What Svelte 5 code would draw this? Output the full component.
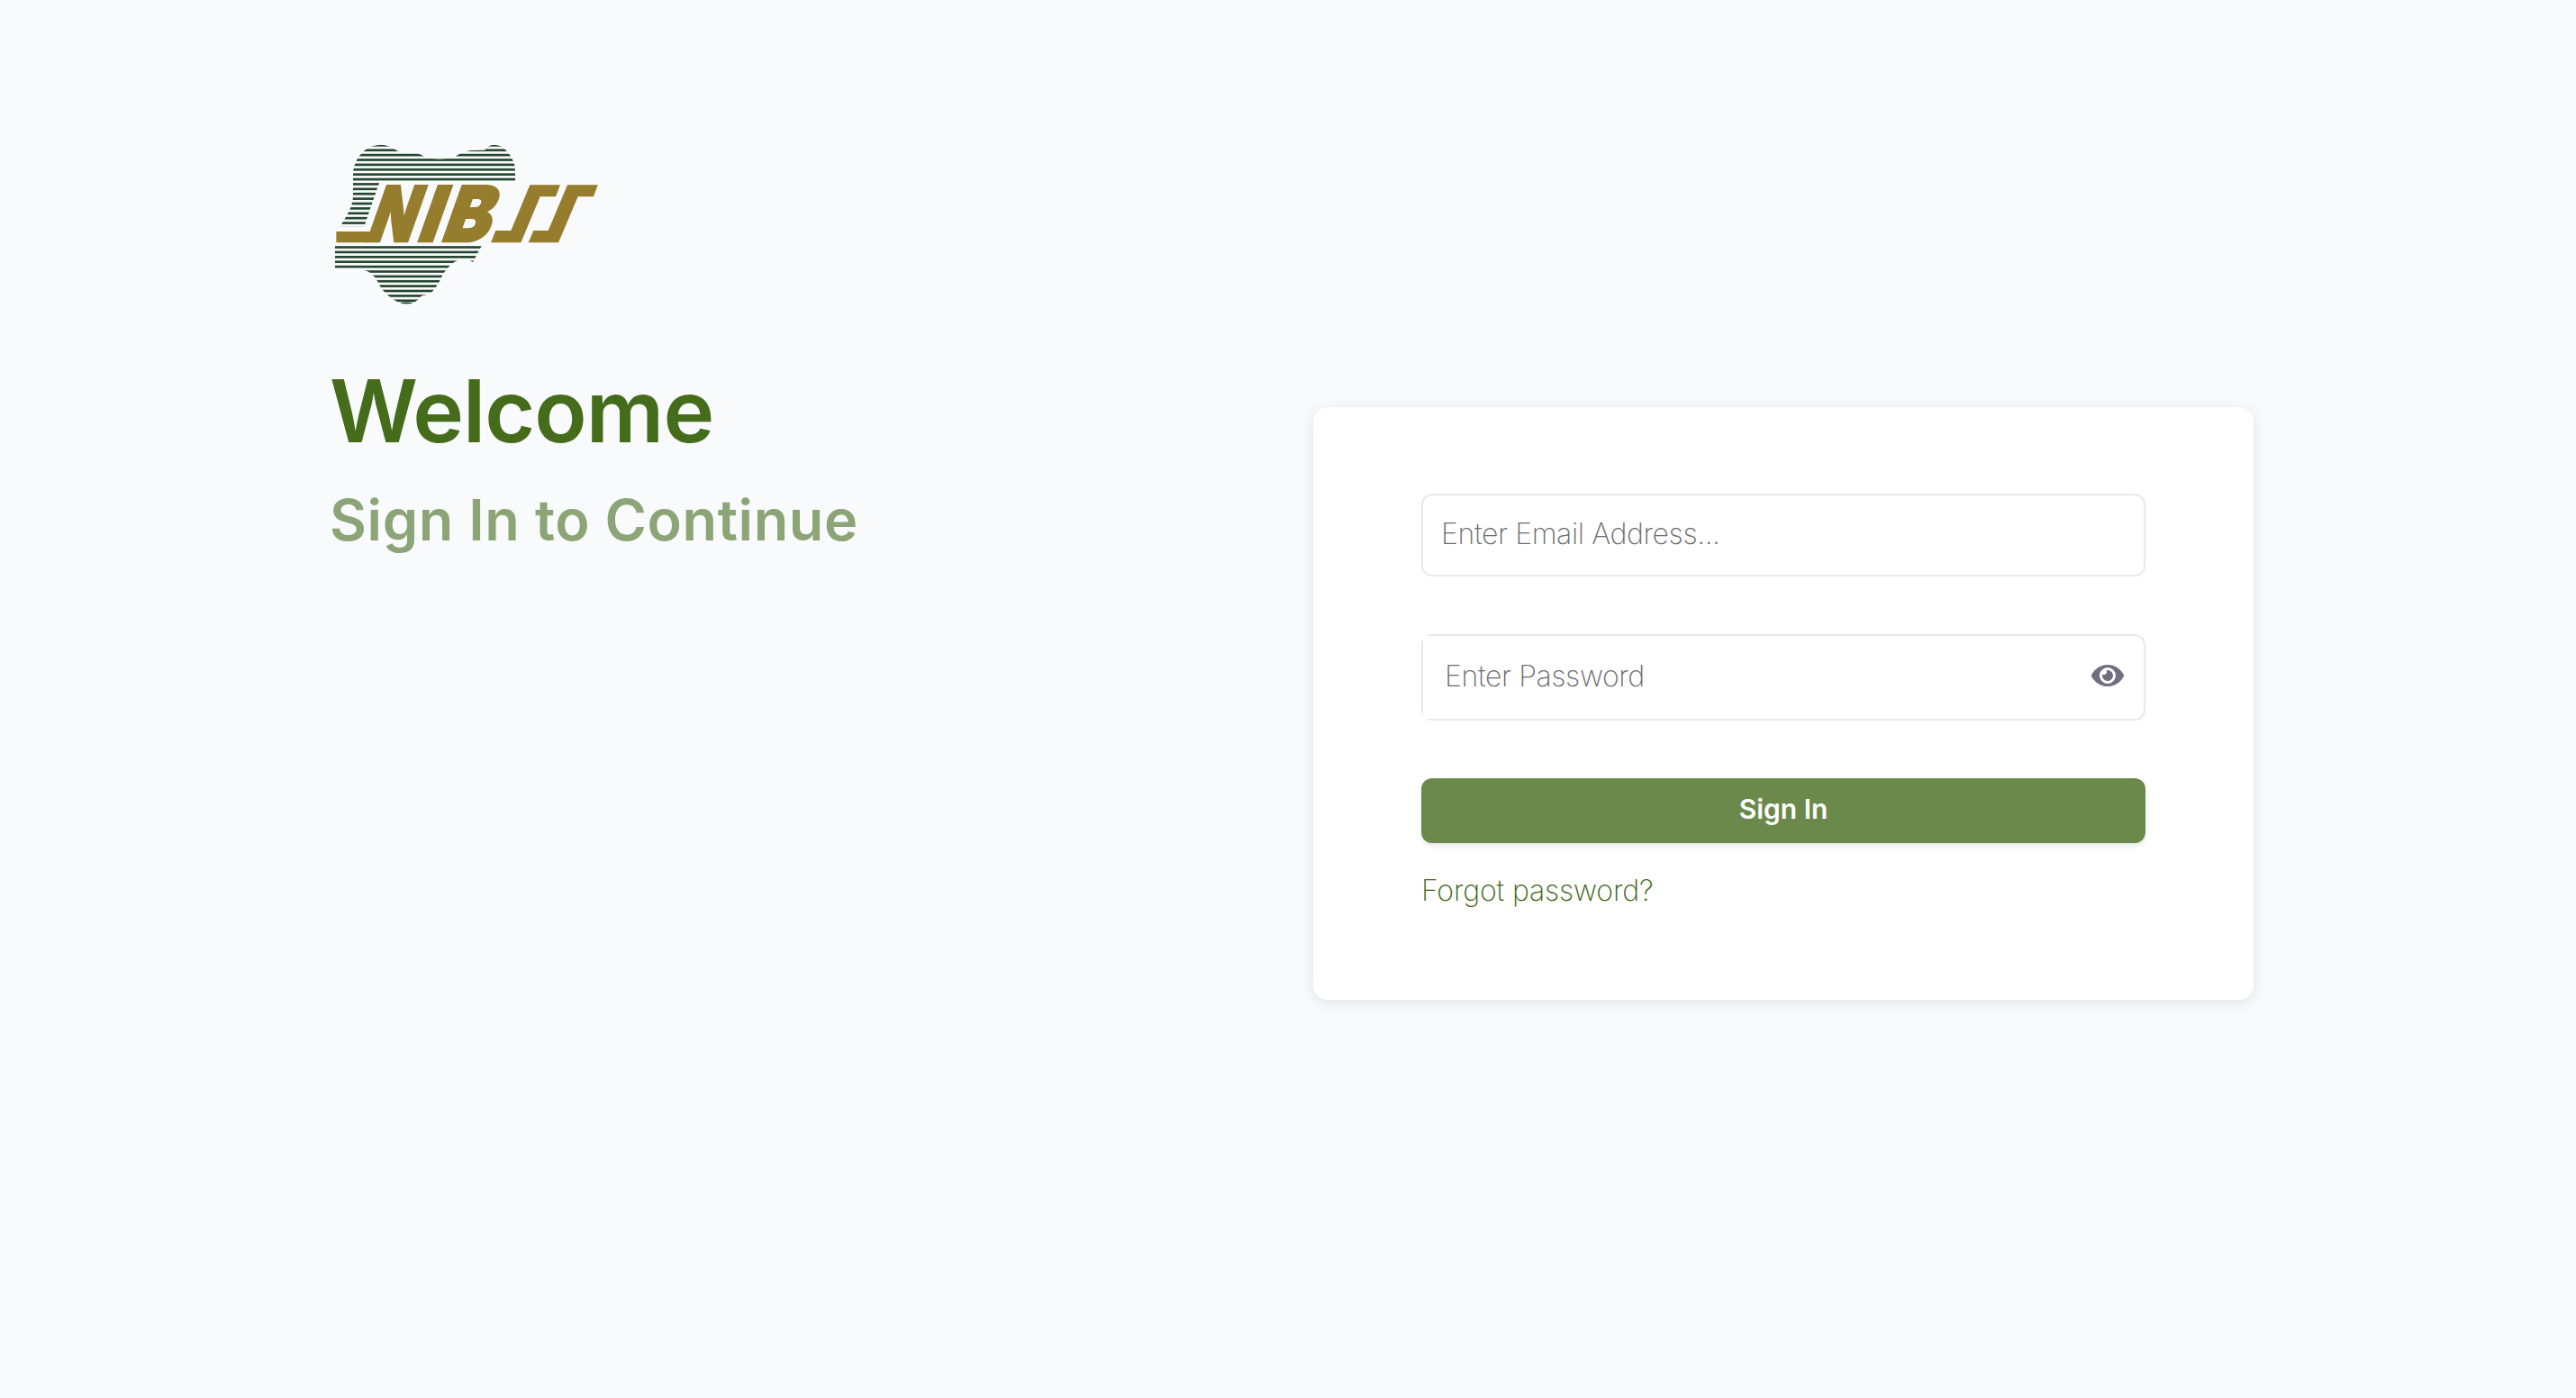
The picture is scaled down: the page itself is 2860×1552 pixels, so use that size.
<script>
  let email = '';
  let password = '';
  let showPassword = false;

  const stripeGap = 16.17;
  const stripes = Array.from({ length: 33 }, (_, i) => 45 + i * stripeGap);

  function togglePassword() {
    showPassword = !showPassword;
  }
</script>

<style>
  :global(body) {
    background: #f9fafc;
  }

  .page {
    display: grid;
    grid-template-columns: 1090px 1044px;
    align-items: start;
    box-sizing: border-box;
    min-height: 100vh;
    padding: 160px 0 0 368px;
    font-family: Inter, "Liberation Sans", sans-serif;
  }

  .logo {
    display: block;
    width: 300px;
    height: 180px;
  }
  .stripe {
    fill: #26472f;
  }
  .faint {
    fill: #d3d7df;
  }
  .gold {
    fill: #967d2d;
  }
  .letter {
    font-family: Inter, sans-serif;
    font-size: 254px;
    font-weight: 900;
    stroke: #967d2d;
    stroke-width: 8px;
  }

  h1,
  h2 {
    margin: 0;
    font-weight: 560;
    white-space: nowrap;
  }
  h1 {
    margin: 58px 0 0 -2px;
    font-size: 96px;
    line-height: 116px;
    letter-spacing: -0.9px;
    color: #446c1b;
  }
  h2 {
    margin: 21px 0 0 -2px;
    font-size: 63px;
    line-height: 84px;
    letter-spacing: 0.6px;
    color: #8ca577;
  }

  .card {
    box-sizing: border-box;
    height: 658px;
    margin-top: 292px;
    padding: 96px 120px;
    border-radius: 16px;
    background: #fff;
    box-shadow: 0 3px 15px rgba(0, 0, 0, 0.1);
  }
  form {
    display: flex;
    flex-direction: column;
  }

  input {
    box-sizing: border-box;
    font: 250 32px Inter, "Liberation Sans", sans-serif;
    letter-spacing: -0.38px;
    color: #444;
    outline: none;
  }
  input::placeholder {
    color: #6c6c6c;
    opacity: 1;
  }
  .email {
    height: 92px;
    padding: 0 20px 3px;
    border: 2px solid #e9e9e9;
    border-radius: 12px;
    background: #fff;
  }
  .password {
    display: flex;
    box-sizing: border-box;
    height: 96px;
    margin-top: 64px;
    border: 2px solid #e9e9e9;
    border-radius: 12px;
  }
  .password input {
    flex: 1;
    padding: 0 24px 3px;
    border: 0;
    background: #fff;
  }
  .toggle {
    display: flex;
    align-items: center;
    padding: 0 22px 4px 0;
    border: 0;
    background: none;
    cursor: pointer;
  }
  .toggle svg {
    width: 36px;
    height: 32px;
    fill: #6e7080;
  }

  .submit {
    height: 72px;
    margin-top: 64px;
    padding: 0 0 5px;
    border: 0;
    border-radius: 12px;
    background: #6a894a;
    box-shadow: 0 4px 4px rgba(0, 0, 0, 0.08);
    color: #fff;
    font: 560 30px Inter, "Liberation Sans", sans-serif;
    cursor: pointer;
  }
  .forgot {
    align-self: flex-start;
    margin-top: 33px;
    font-size: 32px;
    font-weight: 250;
    line-height: 40px;
    letter-spacing: -0.15px;
    color: #3c6414;
    text-decoration: none;
  }
</style>

<div class="page">
  <div class="intro">
    <svg class="logo" viewBox="24 45 900 540" role="img" aria-label="NIBSS">
      <defs>
        <clipPath id="map">
          <path d="M96 169V140Q98 120 103 110Q108 90 135 65Q160 47 190 47Q215 48 248 70L310 76Q325 80 335 88Q390 102 437 86Q460 70 490 66L535 65Q545 48 565 47Q590 47 605 65Q625 85 633 112Q637 130 636 169H185L135 313H57Q70 292 82 270Q96 240 96 215Z" />
          <path d="M36 382H525L495 438L484 432H445Q425 440 410 459Q395 475 385 500Q368 530 355 540Q340 549 325 550Q312 565 300 572Q275 580 245 571Q205 550 185 517Q165 470 130 464L120 460H36Z" />
        </clipPath>
      </defs>
      <g clip-path="url(#map)">
        {#each stripes as y}
          <rect class="stripe" x="30" {y} width="615" height="8" />
        {/each}
      </g>
      <ellipse class="stripe" cx="274" cy="574" rx="20" ry="2.5" />
      <rect class="faint" x="52" y="318" width="81" height="2" />
      <g class="gold">
        <path d="M40 336H160L148 373H40Z" />
        <text class="letter" transform="translate(134 369) skewX(-19.5) scale(0.78 1)">N</text>
        <text class="letter" transform="translate(304 369) skewX(-19.5) scale(0.9 1)">I</text>
        <text class="letter" transform="translate(384 369) skewX(-19.5) scale(0.92 1)">B</text>
        <path d="M555 373L571 333H622L685 181H786L771 220H719L655 373Z" />
        <path d="M680 373L697 333H746L810 181H911L897 220H845L780 373Z" />
      </g>
    </svg>
    <h1>Welcome</h1>
    <h2>Sign In to Continue</h2>
  </div>

  <div class="card">
    <form on:submit|preventDefault>
      <input class="email" type="email" placeholder="Enter Email Address..." bind:value={email} />
      <div class="password">
        {#if showPassword}
          <input type="text" placeholder="Enter Password" bind:value={password} />
        {:else}
          <input type="password" placeholder="Enter Password" bind:value={password} />
        {/if}
        <button class="toggle" type="button" aria-label="Show password" on:click={togglePassword}>
          <svg viewBox="0 0 576 512">
            <path d="M572.52 241.4C518.29 135.59 410.93 64 288 64S57.68 135.64 3.48 241.41a32.35 32.35 0 0 0 0 29.19C57.71 376.41 165.07 448 288 448s230.32-71.64 284.52-177.41a32.35 32.35 0 0 0 0-29.19zM288 400a144 144 0 1 1 144-144 143.93 143.93 0 0 1-144 144zm0-240a95.31 95.31 0 0 0-25.31 3.79 47.85 47.85 0 0 1-66.9 66.9A95.78 95.78 0 1 0 288 160z" />
          </svg>
        </button>
      </div>
      <button class="submit" type="submit">Sign In</button>
      <a class="forgot" href="#forgot">Forgot password?</a>
    </form>
  </div>
</div>
